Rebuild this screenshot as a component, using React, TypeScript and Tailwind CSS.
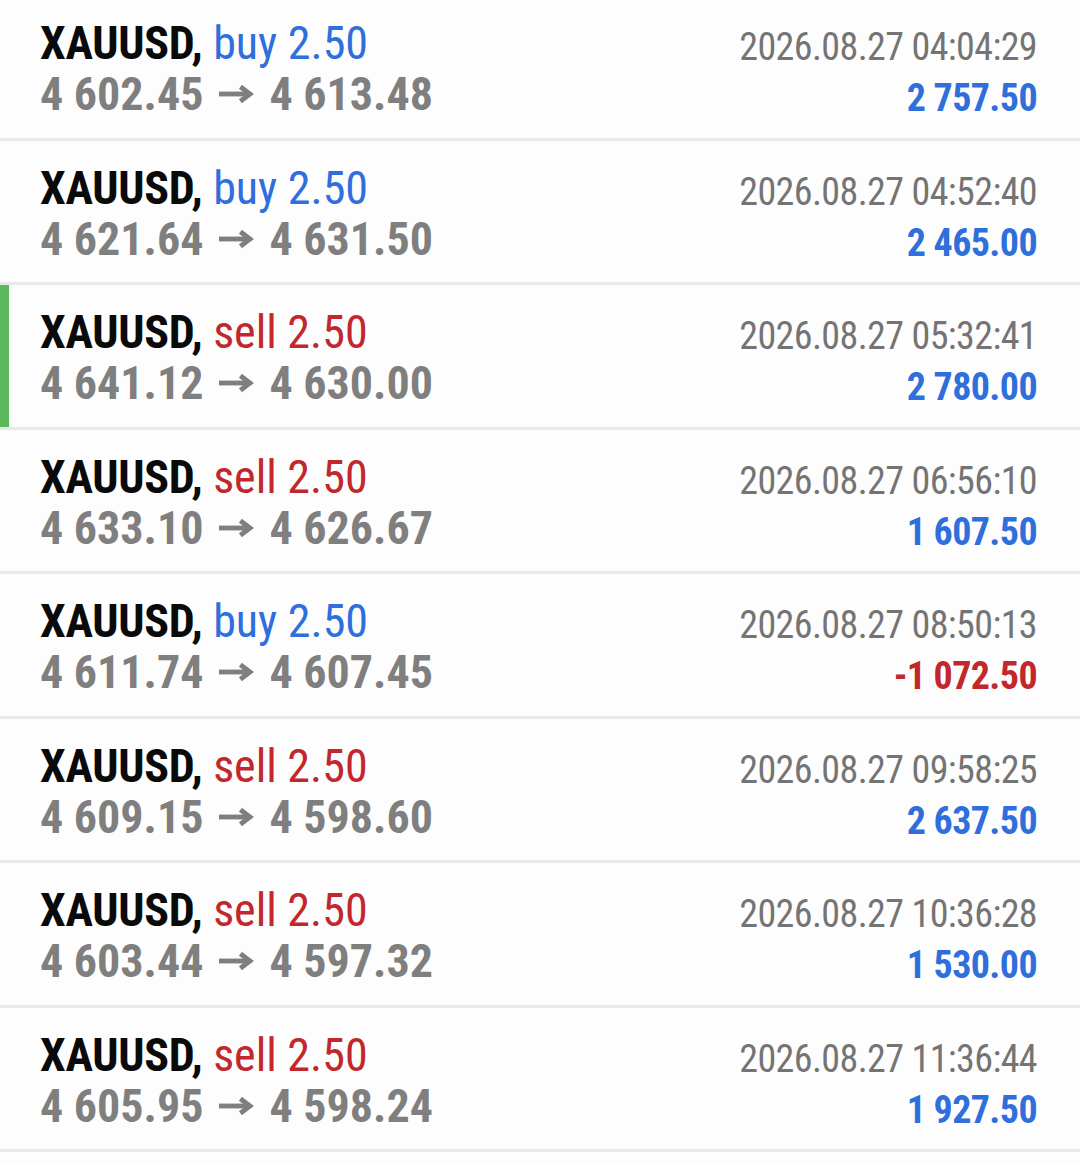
type Deal = {
  side: "buy" | "sell";
  open: string;
  close: string;
  time: string;
  profit: string;
  marked?: boolean;
};

const DEALS: Deal[] = [
  { side: "buy", open: "4 602.45", close: "4 613.48", time: "2026.08.27 04:04:29", profit: "2 757.50" },
  { side: "buy", open: "4 621.64", close: "4 631.50", time: "2026.08.27 04:52:40", profit: "2 465.00" },
  { side: "sell", open: "4 641.12", close: "4 630.00", time: "2026.08.27 05:32:41", profit: "2 780.00", marked: true },
  { side: "sell", open: "4 633.10", close: "4 626.67", time: "2026.08.27 06:56:10", profit: "1 607.50" },
  { side: "buy", open: "4 611.74", close: "4 607.45", time: "2026.08.27 08:50:13", profit: "-1 072.50" },
  { side: "sell", open: "4 609.15", close: "4 598.60", time: "2026.08.27 09:58:25", profit: "2 637.50" },
  { side: "sell", open: "4 603.44", close: "4 597.32", time: "2026.08.27 10:36:28", profit: "1 530.00" },
  { side: "sell", open: "4 605.95", close: "4 598.24", time: "2026.08.27 11:36:44", profit: "1 927.50" },
];

function Arrow() {
  return (
    <svg
      viewBox="0 0 36 20"
      className="ml-[16px] mr-[15px] inline-block h-[20px] w-[35px] align-[6px]"
      fill="none"
      stroke="#7f7f7f"
      strokeWidth={5}
    >
      <path d="M0 10H31" />
      <path d="M22 2.5L32 10L22 17.5" strokeLinejoin="miter" />
    </svg>
  );
}

function DealRow({ deal }: { deal: Deal }) {
  const sideColor = deal.side === "buy" ? "text-[#2f6fdb]" : "text-[#c1272b]";
  const profitColor = deal.profit.startsWith("-") ? "text-[#c1272b]" : "text-[#2f6fdb]";

  return (
    <div className="flex h-[144.5px] border-b-[3px] border-[#e9e9e9]">
      <div className={deal.marked ? "w-[9px] shrink-0 bg-[#5cb85c]" : "w-[9px] shrink-0"} />
      <div className="flex flex-1 justify-between pl-[31px] pr-[43px]">
        <div className="pt-[22px] text-[46px] leading-[51px] whitespace-nowrap">
          <div>
            <span className="font-bold tracking-[-0.3px] text-[#0a0a0a]">XAUUSD,</span>{" "}
            <span className={sideColor}>
              {deal.side} 2.50
            </span>
          </div>
          <div className="font-bold text-[#7f7f7f]">
            {deal.open}
            <Arrow />
            {deal.close}
          </div>
        </div>
        <div className="pt-[26px] text-right text-[38px] leading-[51px] tracking-[-0.6px] whitespace-nowrap">
          <div className="text-[#747474]">{deal.time}</div>
          <div className={`font-bold ${profitColor}`}>{deal.profit}</div>
        </div>
      </div>
    </div>
  );
}

export default function App() {
  return (
    <div
      className="h-[1164px] overflow-hidden bg-[#fdfdfd]"
      style={{ fontFamily: '"Roboto Condensed", Roboto, "Liberation Sans Narrow", sans-serif', fontStretch: "condensed" }}
    >
      <div className="-mt-[4px]">
        {DEALS.map((deal) => (
          <DealRow key={deal.time} deal={deal} />
        ))}
      </div>
    </div>
  );
}
